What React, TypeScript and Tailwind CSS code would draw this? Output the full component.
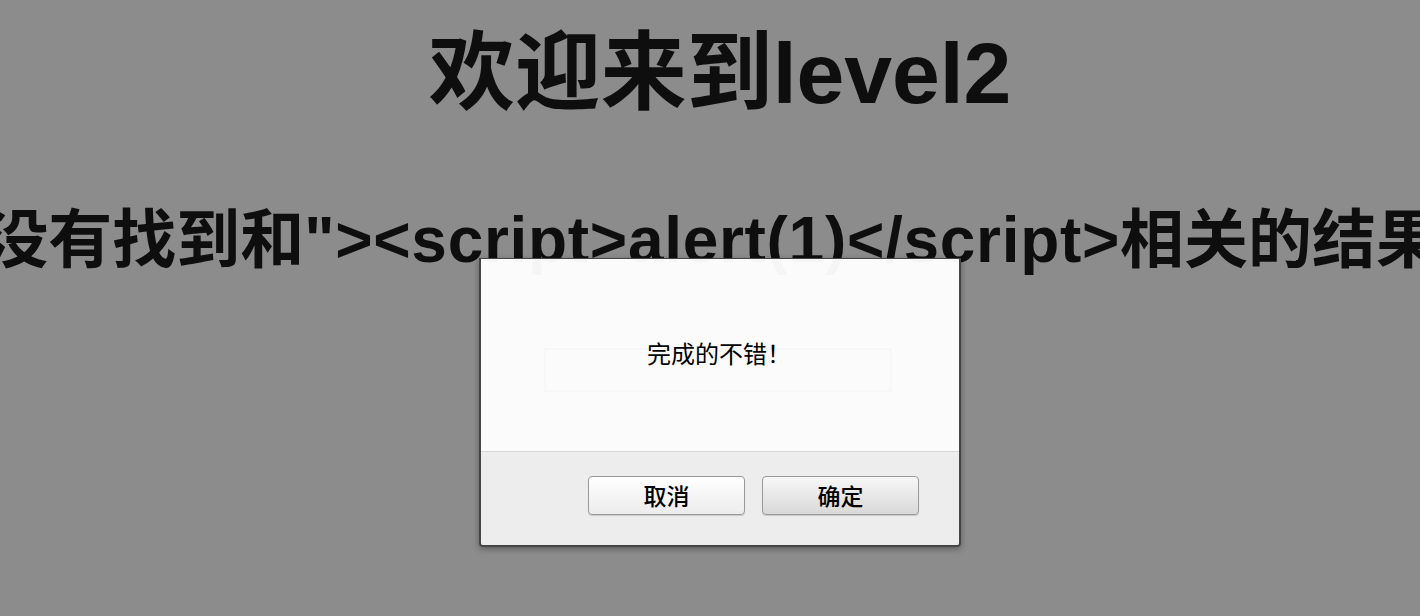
import React from 'react'

const page = "font-['Liberation_Sans','Noto_Sans_CJK_SC',sans-serif]"
const cjk = "font-['Noto_Sans_CJK_SC','Liberation_Sans',sans-serif]"

function Button({ label, primary }: { label: string; primary?: boolean }) {
  return (
    <button
      className={`w-[157px] h-[39px] rounded-[4px] border border-[#9a9a9a] text-[23px] leading-none font-medium text-black shadow-[0_1px_1px_rgba(0,0,0,0.15)] ${cjk} ${
        primary
          ? 'bg-gradient-to-b from-[#f7f7f7] to-[#d9d9d9]'
          : 'bg-gradient-to-b from-[#ffffff] to-[#ececec]'
      }`}
    >
      {label}
    </button>
  )
}

export default function App() {
  return (
    <div className={`relative w-full h-[616px] overflow-hidden bg-[#8c8c8c] text-[#0e0e0e] ${page}`}>
      {/* page behind the alert */}
      <div className="flex flex-col items-center">
        <h1 className="mt-[30px] ml-[20px] text-[86px] leading-none font-bold whitespace-nowrap">
          欢迎来到<span className="tracking-[-0.1px]">level2</span>
        </h1>
        <h2 className="mt-[92px] w-full pl-[22px] flex justify-center text-[64px] leading-none font-bold whitespace-nowrap">
          <span>
            没有找到和<span className="tracking-[0.7px]">"&gt;&lt;script&gt;alert(1)&lt;/script&gt;</span>相关的结果.
          </span>
        </h2>
        <div className="mt-[76px] ml-[15px] w-[348px] h-[44px] border-2 border-[#3a3a3a]" />
      </div>

      {/* alert dialog */}
      <div className="absolute left-[479px] top-[258px] w-[482px] h-[289px] flex flex-col border-2 border-t border-[#454545] rounded-b-[4px] overflow-hidden shadow-[0_2px_6px_rgba(0,0,0,0.35)]">
        <div className="h-[192px] bg-[rgba(255,255,255,0.96)] pt-[82px] flex justify-center pr-[2px]">
          <p className={`text-[24px] leading-6 text-black ${cjk}`}>完成的不错！</p>
        </div>
        <div className="flex-1 bg-[rgba(240,240,240,0.96)] border-t border-[#d9d9d9] flex justify-end items-start gap-[17px] pt-[24px] pr-[40px]">
          <Button label="取消" />
          <Button label="确定" primary />
        </div>
      </div>
    </div>
  )
}
